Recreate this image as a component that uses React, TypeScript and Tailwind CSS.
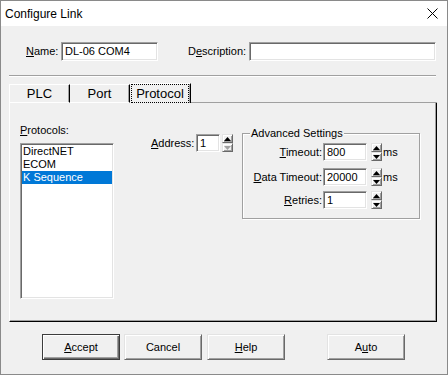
import React from 'react';

const font = "font-['Liberation_Sans',Arial,sans-serif]";

/** Sunken 3D edit box, classic Windows look */
const EditBox = ({ value, className }: { value: string; className: string }) => (
  <div
    className={`${className} h-[18px] bg-white border border-t-[#a0a0a0] border-l-[#a0a0a0] border-b-white border-r-white shadow-[inset_1px_1px_0_#696969,inset_-1px_-1px_0_#e3e3e3] pl-[3px] text-[11px] leading-[16px] text-black`}
  >
    {value}
  </div>
);

const Arrow = ({ up, disabled }: { up?: boolean; disabled?: boolean }) => (
  <div className="flex-1 flex items-center justify-center bg-[#f0f0f0] border border-t-[#e3e3e3] border-l-[#e3e3e3] border-b-[#696969] border-r-[#696969] shadow-[inset_1px_1px_0_#fff,inset_-1px_-1px_0_#a0a0a0]">
    <svg width="7" height="4" viewBox="0 0 7 4">
      <path
        d={up ? 'M3.5 0 L7 4 L0 4 Z' : 'M0 0 L7 0 L3.5 4 Z'}
        fill={disabled ? '#a0a0a0' : '#000'}
      />
    </svg>
  </div>
);

const Spinner = ({ className, downDisabled }: { className: string; downDisabled?: boolean }) => (
  <div className={`${className} h-[18px] w-[11px] shrink-0 flex flex-col`}>
    <Arrow up />
    <Arrow disabled={downDisabled} />
  </div>
);

const Key = ({ children }: { children: string }) => <u className="underline-offset-[1px]">{children}</u>;

const Button = ({ children, className, isDefault }: { children: React.ReactNode; className: string; isDefault?: boolean }) => (
  <div
    className={`${className} w-[78px] h-[26px] flex items-center justify-center text-[11px] text-black bg-[#f0f0f0] ${
      isDefault
        ? 'border border-[#3c3c3c] shadow-[inset_1px_1px_0_#fff,inset_-1px_-1px_0_#696969,inset_-2px_-2px_0_#a0a0a0]'
        : 'border border-t-[#e3e3e3] border-l-[#e3e3e3] border-b-[#696969] border-r-[#696969] shadow-[inset_1px_1px_0_#fff,inset_-1px_-1px_0_#a0a0a0]'
    }`}
  >
    <span>{children}</span>
  </div>
);

const SettingRow = ({ label, value, unit, className }: { label: React.ReactNode; value: string; unit?: boolean; className: string }) => (
  <div className={`${className} h-[18px] flex items-center`}>
    <span className="w-[79px] shrink-0 text-right">{label}</span>
    <EditBox value={value} className="ml-[1px] w-[44px] shrink-0" />
    <Spinner className="ml-[4px]" />
    {unit && <span className="ml-[1px]">ms</span>}
  </div>
);

export default function App() {
  return (
    <div className={`${font} w-[448px] h-[375px] bg-[#f0f0f0] border border-[#8a8a8a] flex flex-col overflow-hidden text-black`}>
      {/* Title bar */}
      <div className="h-[25px] bg-white flex items-center justify-between pl-[4px] pr-[9px] shrink-0">
        <span className="text-[12px]">Configure Link</span>
        <svg width="11" height="11" viewBox="0 0 11 11">
          <path d="M0.5 0.5 L10.5 10.5 M10.5 0.5 L0.5 10.5" stroke="#000" strokeWidth="1" />
        </svg>
      </div>

      {/* Name / Description */}
      <div className="mt-[16px] h-[19px] flex items-center pl-[25px] text-[11px]">
        <span className="w-[35px]"><Key>N</Key>ame:</span>
        <EditBox value="DL-06 COM4" className="w-[97px] h-[19px]" />
        <span className="ml-[30px] w-[61px]">D<Key>e</Key>scription:</span>
        <EditBox value="" className="w-[187px] h-[19px]" />
      </div>

      {/* Etched separator */}
      <div className="mt-[14px] ml-[8px] w-[427px] border-t border-[#a0a0a0] border-b border-b-white" />

      {/* Tab strip */}
      <div className="mt-[6px] ml-[8px] w-[428px] h-[20px] flex items-end text-[13px]">
        <div className="w-[61px] h-[19px] pt-[1px] flex items-center justify-center border-l border-t border-l-white border-t-white border-r border-r-black shadow-[inset_-1px_0_0_#a0a0a0] border-b border-b-white">
          PLC
        </div>
        <div className="w-[60px] h-[19px] pt-[1px] flex items-center justify-center border-t border-t-white border-r border-r-black shadow-[inset_-1px_0_0_#a0a0a0] border-b border-b-white">
          Port
        </div>
        <div className="w-[61px] h-[20px] flex items-start justify-center pt-[1px] border-t border-t-white border-r border-r-black shadow-[inset_-1px_0_0_#a0a0a0]">
          <span className="outline-1 outline-dotted outline-black px-[4px] leading-[17px] h-[17px]">Protocol</span>
        </div>
        <div className="flex-1 h-[19px] border-b border-b-[#a0a0a0]" />
      </div>

      {/* Tab panel */}
      <div className="ml-[8px] w-[428px] h-[219px] border-l border-l-white border-r border-r-black border-b border-b-black shadow-[inset_-1px_-1px_0_#a0a0a0] flex items-start text-[11px]">
        {/* Protocols list */}
        <div className="ml-[10px] mt-[21px] flex flex-col shrink-0">
          <span className="leading-[13px]"><Key>P</Key>rotocols:</span>
          <div className="mt-[6px] w-[94px] h-[156px] bg-white border border-t-[#a0a0a0] border-l-[#a0a0a0] border-b-white border-r-white shadow-[inset_1px_1px_0_#696969,inset_-1px_-1px_0_#e3e3e3] pt-[1px] px-[1px]">
            <div className="h-[13px] leading-[13px] pl-[1px]">DirectNET</div>
            <div className="h-[13px] leading-[13px] pl-[1px]">ECOM</div>
            <div className="h-[13px] leading-[13px] pl-[1px] bg-[#0078d7] text-white">K Sequence</div>
          </div>
        </div>

        {/* Address */}
        <div className="ml-[37px] mt-[31px] h-[18px] flex items-center shrink-0">
          <span className="w-[45px]"><Key>A</Key>ddress:</span>
          <EditBox value="1" className="w-[24px]" />
          <Spinner className="ml-[2px]" downDisabled />
        </div>

        {/* Advanced settings group */}
        <div className="ml-[9px] mt-[24px] w-[178px] h-[92px] shrink-0 pt-[6px]">
          <div className="h-full border border-[#a0a0a0] shadow-[inset_1px_1px_0_#fff,1px_1px_0_#fff]">
            <span className="block w-fit -mt-[7px] ml-[7px] px-[1px] leading-[13px] bg-[#f0f0f0]">Advanced Settings</span>
            <SettingRow className="mt-[3px]" label={<><Key>T</Key>imeout:</>} value="800" unit />
            <SettingRow className="mt-[7px]" label={<><Key>D</Key>ata Timeout:</>} value="20000" unit />
            <SettingRow className="mt-[5px]" label={<><Key>R</Key>etries:</>} value="1" />
          </div>
        </div>
      </div>

      {/* Buttons */}
      <div className="mt-[12px] pl-[41px] flex">
        <Button className="" isDefault><Key>A</Key>ccept</Button>
        <Button className="ml-[4px]">Cancel</Button>
        <Button className="ml-[5px]"><Key>H</Key>elp</Button>
        <Button className="ml-[42px]">A<Key>u</Key>to</Button>
      </div>
    </div>
  );
}
